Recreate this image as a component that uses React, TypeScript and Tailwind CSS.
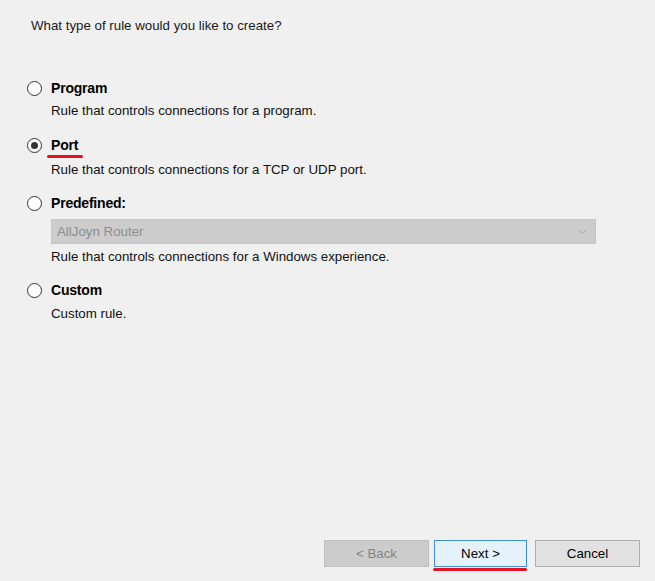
const Radio = ({ checked }: { checked?: boolean }) => (
  <span className="w-[15px] h-[15px] rounded-full border border-[#333333] bg-white flex items-center justify-center shrink-0">
    {checked && <span className="w-[7px] h-[7px] rounded-full bg-[#333333]" />}
  </span>
)

const Option = ({
  label,
  checked,
  marked,
  className,
}: {
  label: string
  checked?: boolean
  marked?: boolean
  className?: string
}) => (
  <div className={`flex items-center h-4 pl-[27px] gap-[9px] ${className ?? ""}`}>
    <Radio checked={checked} />
    <span className="relative text-[14px] font-bold leading-4 text-black tracking-[-0.2px]">
      {label}
      {marked && <span className="absolute left-[-4px] top-[18px] w-[36px] h-[3px] rounded-full bg-[#e3121e]" />}
    </span>
  </div>
)

const Desc = ({ text, className }: { text: string; className?: string }) => (
  <p className={`pl-[51px] text-[13.3px] leading-4 text-[#111111] ${className ?? ""}`}>{text}</p>
)

const App = () => {
  return (
    <div
      className="w-[655px] h-[581px] bg-[#f0f0f0] flex flex-col"
      style={{ fontFamily: '"Liberation Sans", Arial, sans-serif' }}
    >
      <p className="pt-[18px] pl-[31px] text-[13.3px] leading-4 text-[#1a1a1a]">What type of rule would you like to create?</p>

      <Option label="Program" className="mt-[46px]" />
      <Desc text="Rule that controls connections for a program." className="mt-[7px]" />

      <Option label="Port" checked marked className="mt-[18px]" />
      <Desc text="Rule that controls connections for a TCP or UDP port." className="mt-[9px]" />

      <Option label="Predefined:" className="mt-[17px]" />
      <div className="ml-[51px] mt-[8px] w-[545px] h-[25px] bg-[#cccccc] border border-[#c6c6c6] flex items-center justify-between pl-[5px] pr-[8px]">
        <span className="text-[13.3px] text-[#8c8c8c]">AllJoyn Router</span>
        <svg width="9" height="6" viewBox="0 0 9 6" fill="none" stroke="#a8a8a8" strokeWidth="1">
          <path d="M1 1l3.5 3.5L8 1" />
        </svg>
      </div>
      <Desc text="Rule that controls connections for a Windows experience." className="mt-[5px]" />

      <Option label="Custom" className="mt-[17px]" />
      <Desc text="Custom rule." className="mt-[8px]" />

      <div className="flex-1" />

      <div className="flex justify-end pr-[15px] pb-[14px] text-[13.3px]">
        <button className="w-[105px] h-[27px] bg-[#cccccc] border border-[#bfbfbf] text-[#858585]">&lt; Back</button>
        <div className="relative ml-[5px]">
          <button className="w-[93px] h-[27px] bg-[#e5f1fb] border border-[#3c8fdc] text-black">Next &gt;</button>
          <span className="absolute left-[-1px] top-[28px] w-[94px] h-[3px] rounded-full bg-[#e3121e]" />
        </div>
        <button className="ml-[8px] w-[105px] h-[27px] bg-[#e1e1e1] border border-[#adadad] text-black">Cancel</button>
      </div>
    </div>
  )
}

export default App
